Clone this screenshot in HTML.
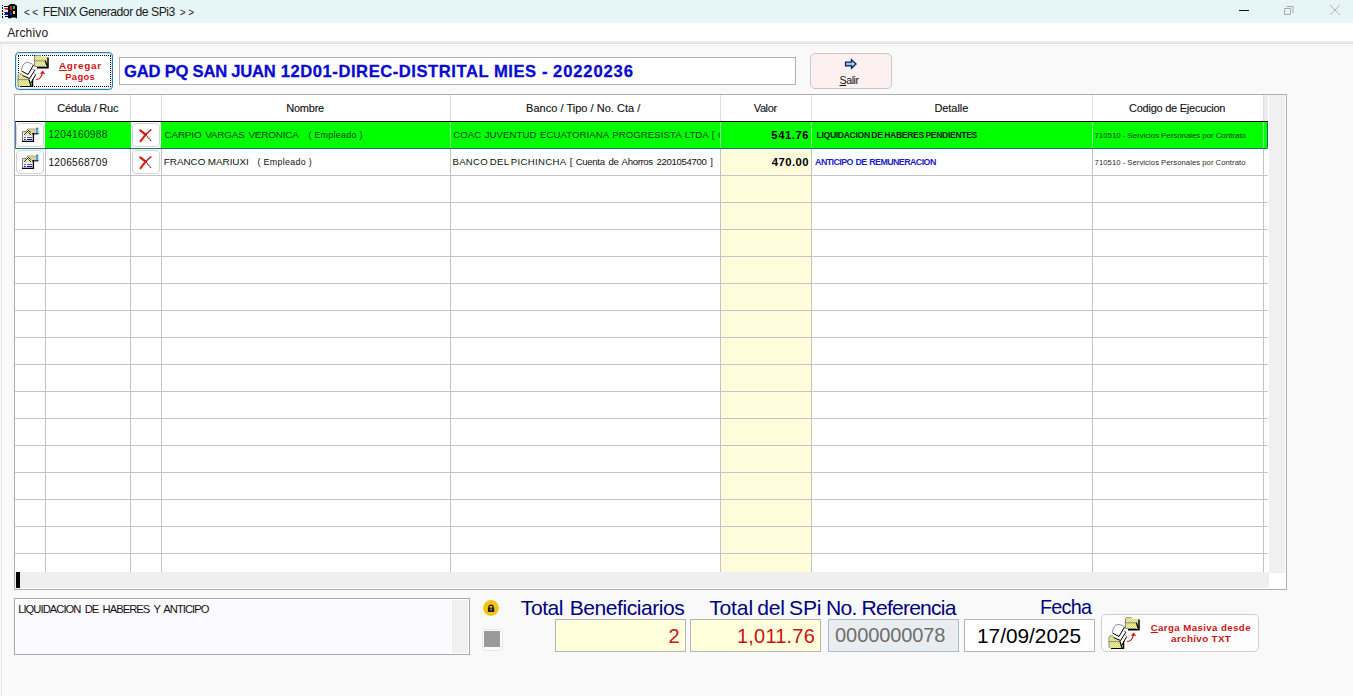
<!DOCTYPE html><html><head><meta charset="utf-8"><style>
*{box-sizing:border-box;margin:0;padding:0}
html,body{width:1353px;height:696px;overflow:hidden;background:#f9f9f9;font-family:"Liberation Sans",sans-serif;position:relative}
.a{position:absolute}
.t{position:absolute;white-space:pre;line-height:1}
</style></head><body>
<div class="a" style="left:0px;top:0px;width:1353px;height:23px;background:#e6f5f6"></div>
<div class="a" style="left:0px;top:23px;width:1353px;height:18px;background:#fff"></div>
<div class="a" style="left:0px;top:41px;width:1353px;height:1px;background:#f0f0f0"></div>
<div class="a" style="left:0px;top:42px;width:1353px;height:1px;background:#e6e6e6"></div>
<div class="a" style="left:0px;top:43px;width:1353px;height:1px;background:#dedede"></div>
<div class="a" style="left:0px;top:44px;width:1353px;height:1px;background:#fdfdfd"></div>
<div class="a" style="left:3px;top:45px;width:1350px;height:1px;background:#efefef"></div>
<div class="a" style="left:0px;top:16px;width:1353px;height:7px;background:#e6f6f9"></div>
<div class="a" style="left:1px;top:44px;width:1px;height:652px;background:#e6e6e6"></div>
<div class="a" style="left:2px;top:45px;width:1px;height:651px;background:#fdfdfd"></div>
<svg class="a" style="left:1px;top:3px" width="18" height="16" viewBox="0 0 18 16" shape-rendering="crispEdges">
<rect x="1" y="2" width="1" height="1" fill="#000"/><rect x="1" y="4" width="1" height="2" fill="#000"/><rect x="1" y="7" width="1" height="2" fill="#000"/><rect x="1" y="10" width="1" height="2" fill="#000"/><rect x="1" y="13" width="1" height="2" fill="#000"/>
<rect x="3" y="3" width="4" height="1" fill="#000"/>
<rect x="3" y="5" width="1" height="1" fill="#c04040"/><rect x="4" y="5" width="3" height="1" fill="#e02020"/>
<rect x="3" y="7" width="4" height="1" fill="#ffffff"/><rect x="4" y="6" width="3" height="1" fill="#e84040"/>
<rect x="3" y="9" width="1" height="1" fill="#4040c0"/><rect x="4" y="9" width="3" height="1" fill="#2020d0"/>
<rect x="4" y="10" width="3" height="1" fill="#000"/>
<rect x="3" y="11" width="4" height="1" fill="#2020d0"/>
<rect x="4" y="13" width="3" height="1" fill="#000"/>
<path d="M7 15V3l1-1 2-1h3l2 1 1 1v12.5l-2-1h-3l-2 1z" fill="#000" shape-rendering="auto"/>
<rect x="9" y="3" width="2" height="4" fill="#e02020"/><rect x="12" y="3" width="2" height="3" fill="#20d040"/>
<rect x="9" y="8" width="2" height="4" fill="#1a1ad8"/><rect x="12" y="8" width="2" height="3" fill="#f0e030"/>
</svg>
<div class="t" style="left:42.70px;top:6px;font-size:12.2px;letter-spacing:-0.502px;color:#1a1a1a;">FENIX Generador de SPi3</div>
<div class="t" style="left:24.11px;top:8px;font-size:10.0px;letter-spacing:0.000px;color:#1a1a1a;">&lt;</div>
<div class="t" style="left:32.31px;top:8px;font-size:10.0px;letter-spacing:0.000px;color:#1a1a1a;">&lt;</div>
<div class="t" style="left:179.81px;top:8px;font-size:10.0px;letter-spacing:0.000px;color:#1a1a1a;">&gt;</div>
<div class="t" style="left:188.21px;top:8px;font-size:10.0px;letter-spacing:0.000px;color:#1a1a1a;">&gt;</div>
<div class="t" style="left:7.18px;top:27px;font-size:12.0px;letter-spacing:0.151px;color:#1a1a1a;">Archivo</div>
<div class="a" style="left:1239px;top:10px;width:10px;height:1px;background:#111"></div>
<svg class="a" style="left:1283px;top:4px" width="12" height="12" viewBox="0 0 12 12"><path d="M1.5 4.5h6v6h-6z" fill="none" stroke="#a8a8a8" stroke-width="1"/><path d="M3.5 2.5h6.5v6.5" fill="none" stroke="#a8a8a8" stroke-width="1"/></svg>
<svg class="a" style="left:1329px;top:4px" width="12" height="12" viewBox="0 0 12 12"><path d="M1 1l10 10M11 1L1 11" stroke="#b4b4b4" stroke-width="1"/></svg>
<div class="a" style="left:14px;top:94px;width:1273px;height:496px;border:1px solid #aeaeae;background:#fff"></div>
<div class="a" style="left:721px;top:148px;width:90px;height:424px;background:#fffcdc"></div>
<div class="a" style="left:1269px;top:95px;width:16px;height:478px;background:#f0f0f0"></div>
<div class="a" style="left:1264px;top:95px;width:4px;height:26px;background:#ececec"></div>
<div class="a" style="left:15px;top:572px;width:1254px;height:16px;background:#efefef"></div>
<div class="a" style="left:16px;top:572px;width:4px;height:16px;background:#000"></div>
<div class="a" style="left:15px;top:148px;width:1253px;height:1px;background:#c4c4c4"></div>
<div class="a" style="left:15px;top:175px;width:1253px;height:1px;background:#c4c4c4"></div>
<div class="a" style="left:15px;top:202px;width:1253px;height:1px;background:#c4c4c4"></div>
<div class="a" style="left:15px;top:229px;width:1253px;height:1px;background:#c4c4c4"></div>
<div class="a" style="left:15px;top:256px;width:1253px;height:1px;background:#c4c4c4"></div>
<div class="a" style="left:15px;top:283px;width:1253px;height:1px;background:#c4c4c4"></div>
<div class="a" style="left:15px;top:310px;width:1253px;height:1px;background:#c4c4c4"></div>
<div class="a" style="left:15px;top:337px;width:1253px;height:1px;background:#c4c4c4"></div>
<div class="a" style="left:15px;top:364px;width:1253px;height:1px;background:#c4c4c4"></div>
<div class="a" style="left:15px;top:391px;width:1253px;height:1px;background:#c4c4c4"></div>
<div class="a" style="left:15px;top:418px;width:1253px;height:1px;background:#c4c4c4"></div>
<div class="a" style="left:15px;top:445px;width:1253px;height:1px;background:#c4c4c4"></div>
<div class="a" style="left:15px;top:472px;width:1253px;height:1px;background:#c4c4c4"></div>
<div class="a" style="left:15px;top:499px;width:1253px;height:1px;background:#c4c4c4"></div>
<div class="a" style="left:15px;top:526px;width:1253px;height:1px;background:#c4c4c4"></div>
<div class="a" style="left:15px;top:553px;width:1253px;height:1px;background:#c4c4c4"></div>
<div class="a" style="left:16px;top:149px;width:1252px;height:1px;background:#e6f8f8"></div>
<div class="a" style="left:45px;top:121px;width:1px;height:451px;background:#c4c4c4"></div>
<div class="a" style="left:45px;top:95px;width:1px;height:26px;background:#dcdce4"></div>
<div class="a" style="left:130px;top:121px;width:1px;height:451px;background:#c4c4c4"></div>
<div class="a" style="left:130px;top:95px;width:1px;height:26px;background:#dcdce4"></div>
<div class="a" style="left:161px;top:121px;width:1px;height:451px;background:#c4c4c4"></div>
<div class="a" style="left:161px;top:95px;width:1px;height:26px;background:#dcdce4"></div>
<div class="a" style="left:450px;top:121px;width:1px;height:451px;background:#c4c4c4"></div>
<div class="a" style="left:450px;top:95px;width:1px;height:26px;background:#dcdce4"></div>
<div class="a" style="left:720px;top:121px;width:1px;height:451px;background:#c4c4c4"></div>
<div class="a" style="left:720px;top:95px;width:1px;height:26px;background:#dcdce4"></div>
<div class="a" style="left:811px;top:121px;width:1px;height:451px;background:#c4c4c4"></div>
<div class="a" style="left:811px;top:95px;width:1px;height:26px;background:#dcdce4"></div>
<div class="a" style="left:1092px;top:121px;width:1px;height:451px;background:#c4c4c4"></div>
<div class="a" style="left:1092px;top:95px;width:1px;height:26px;background:#dcdce4"></div>
<div class="a" style="left:1263px;top:121px;width:1px;height:451px;background:#c4c4c4"></div>
<div class="a" style="left:1263px;top:95px;width:1px;height:26px;background:#dcdce4"></div>
<div class="t" style="left:57.15px;top:103px;font-size:11.0px;letter-spacing:-0.202px;color:#111;-webkit-text-stroke:0.12px currentColor">Cédula / Ruc</div>
<div class="t" style="left:286.29px;top:103px;font-size:11.0px;letter-spacing:-0.240px;color:#111;-webkit-text-stroke:0.12px currentColor">Nombre</div>
<div class="t" style="left:526.09px;top:103px;font-size:11.0px;letter-spacing:0.022px;color:#111;-webkit-text-stroke:0.12px currentColor">Banco / Tipo / No. Cta /</div>
<div class="t" style="left:753.76px;top:103px;font-size:11.0px;letter-spacing:-0.386px;color:#111;-webkit-text-stroke:0.12px currentColor">Valor</div>
<div class="t" style="left:934.39px;top:103px;font-size:11.0px;letter-spacing:-0.049px;color:#111;-webkit-text-stroke:0.12px currentColor">Detalle</div>
<div class="t" style="left:1129.05px;top:103px;font-size:11.0px;letter-spacing:-0.248px;color:#111;-webkit-text-stroke:0.12px currentColor">Codigo de Ejecucion</div>
<div class="a" style="left:15px;top:121px;width:1253px;height:28px;background:#00ff00;border-top:1px solid #000;border-bottom:1px solid #1c7066;border-left:1px solid #4a80b8;border-right:1px solid #1c7066;border-bottom-right-radius:2px"></div>
<div class="a" style="left:16px;top:122px;width:29px;height:26px;background:#fff"></div>
<div class="a" style="left:131px;top:122px;width:30px;height:26px;background:#fff"></div>
<div class="a" style="left:450px;top:122px;width:1px;height:26px;background:#8cff8c"></div>
<div class="a" style="left:720px;top:122px;width:1px;height:26px;background:#8cff8c"></div>
<div class="a" style="left:811px;top:122px;width:1px;height:26px;background:#8cff8c"></div>
<div class="a" style="left:1092px;top:122px;width:1px;height:26px;background:#8cff8c"></div>
<div class="a" style="left:1263px;top:122px;width:1px;height:26px;background:#8cff8c"></div>
<div class="a" style="left:16px;top:123px;width:28px;height:24px;border:1px solid #d4d4d4;border-radius:4px;background:#fdfdfd"></div>
<div class="a" style="left:132px;top:123px;width:28px;height:24px;border:1px solid #d4d4d4;border-radius:4px;background:#fdfdfd"></div>
<svg class="a" style="left:21px;top:127px" width="18" height="16" viewBox="0 0 18 16">
<defs><pattern id="ck2" width="2" height="2" patternUnits="userSpaceOnUse"><rect width="2" height="2" fill="#f0eca0"/><rect width="1" height="1" fill="#202010"/><rect x="1" y="1" width="1" height="1" fill="#202010"/></pattern></defs>
<path d="M1.5 4.5h11v10h-11z" fill="#eef0ff"/>
<path d="M1.5 14.5V4.5h11" fill="none" stroke="#808080" stroke-width="1"/>
<path d="M12.4 4.5v9.9H1" fill="none" stroke="#000" stroke-width="1.3"/>
<path d="M3 10.5h1.8M6 10.5h5" stroke="#5050b0" stroke-width="1"/>
<path d="M3 12.5h1.8M6 12.5h5" stroke="#10107a" stroke-width="1.2"/>
<path d="M3.2 7.8l4-4.8 3 5.2-1.5 1.2z" fill="#f2eeb8"/>
<path d="M3.2 7.8l4-4.8 2.8 5.2" fill="none" stroke="url(#ck2)" stroke-width="2"/>
<path d="M8 2h7.5v4.6h-5z" fill="#d6cf9c"/>
<path d="M8 2h7" stroke="#b8b080" stroke-width="1"/>
<path d="M15 1.2h2.3v5.3H15z" fill="#48a6e6"/>
<path d="M15 1.2h2.3" stroke="#1a5aa0" stroke-width="0.8"/>
<path d="M11 6.8h6.5" stroke="#000" stroke-width="1.1"/>
</svg>
<svg class="a" style="left:139px;top:129px" width="14" height="14" viewBox="0 0 14 14">
<path d="M1.3 1.3L6.6 5.6" stroke="#d41a14" stroke-width="2.2" stroke-linecap="round"/>
<path d="M6.6 5.6L12.4 12.4" stroke="#a00a0a" stroke-width="1.1" stroke-dasharray="1.6 0.6"/>
<path d="M1.6 12.1L6.6 5.6" stroke="#dc2418" stroke-width="2.2" stroke-linecap="round"/>
<path d="M6.6 5.6L12.4 0.6" stroke="#b00c0c" stroke-width="1.3"/>
</svg>
<div class="a" style="left:16px;top:150px;width:28px;height:24px;border:1px solid #d4d4d4;border-radius:4px;background:#fdfdfd"></div>
<div class="a" style="left:132px;top:150px;width:28px;height:24px;border:1px solid #d4d4d4;border-radius:4px;background:#fdfdfd"></div>
<svg class="a" style="left:21px;top:154px" width="18" height="16" viewBox="0 0 18 16">
<defs><pattern id="ck2" width="2" height="2" patternUnits="userSpaceOnUse"><rect width="2" height="2" fill="#f0eca0"/><rect width="1" height="1" fill="#202010"/><rect x="1" y="1" width="1" height="1" fill="#202010"/></pattern></defs>
<path d="M1.5 4.5h11v10h-11z" fill="#eef0ff"/>
<path d="M1.5 14.5V4.5h11" fill="none" stroke="#808080" stroke-width="1"/>
<path d="M12.4 4.5v9.9H1" fill="none" stroke="#000" stroke-width="1.3"/>
<path d="M3 10.5h1.8M6 10.5h5" stroke="#5050b0" stroke-width="1"/>
<path d="M3 12.5h1.8M6 12.5h5" stroke="#10107a" stroke-width="1.2"/>
<path d="M3.2 7.8l4-4.8 3 5.2-1.5 1.2z" fill="#f2eeb8"/>
<path d="M3.2 7.8l4-4.8 2.8 5.2" fill="none" stroke="url(#ck2)" stroke-width="2"/>
<path d="M8 2h7.5v4.6h-5z" fill="#d6cf9c"/>
<path d="M8 2h7" stroke="#b8b080" stroke-width="1"/>
<path d="M15 1.2h2.3v5.3H15z" fill="#48a6e6"/>
<path d="M15 1.2h2.3" stroke="#1a5aa0" stroke-width="0.8"/>
<path d="M11 6.8h6.5" stroke="#000" stroke-width="1.1"/>
</svg>
<svg class="a" style="left:139px;top:156px" width="14" height="14" viewBox="0 0 14 14">
<path d="M1.3 1.3L6.6 5.6" stroke="#d41a14" stroke-width="2.2" stroke-linecap="round"/>
<path d="M6.6 5.6L12.4 12.4" stroke="#a00a0a" stroke-width="1.1" stroke-dasharray="1.6 0.6"/>
<path d="M1.6 12.1L6.6 5.6" stroke="#dc2418" stroke-width="2.2" stroke-linecap="round"/>
<path d="M6.6 5.6L12.4 0.6" stroke="#b00c0c" stroke-width="1.3"/>
</svg>
<div class="t" style="left:48.43px;top:130px;font-size:10.2px;letter-spacing:0.248px;color:#0a3a0a;">1204160988</div>
<div class="t" style="left:48.43px;top:158px;font-size:10.2px;letter-spacing:0.252px;color:#111;">1206568709</div>
<div class="t" style="left:164.48px;top:130px;font-size:9.9px;letter-spacing:-0.152px;word-spacing:1.132px;color:#0a3a0a;">CARPIO VARGAS VERONICA</div>
<div class="t" style="left:308.44px;top:131px;font-size:9.0px;letter-spacing:0.221px;color:#0a3a0a;">( Empleado )</div>
<div class="t" style="left:163.82px;top:157px;font-size:9.9px;letter-spacing:-0.036px;word-spacing:-0.175px;color:#111;">FRANCO MARIUXI</div>
<div class="t" style="left:257.45px;top:158px;font-size:8.9px;letter-spacing:0.322px;color:#111;">( Empleado )</div>
<div class="t" style="left:452.44px;top:157px;font-size:9.6px;letter-spacing:0.319px;word-spacing:-1.320px;color:#111;">BANCO DEL PICHINCHA</div>
<div class="t" style="left:569.67px;top:157px;font-size:9.6px;letter-spacing:-0.337px;word-spacing:1.415px;color:#111;">[ Cuenta de Ahorros 2201054700 ]</div>
<div class="a" style="left:451px;top:122px;width:269px;height:26px;overflow:hidden">
<div class="t" style="left:2.20px;top:8px;font-size:9.6px;letter-spacing:0.087px;word-spacing:0.674px;color:#0a3a0a;">COAC JUVENTUD ECUATORIANA PROGRESISTA LTDA [ Cuenta de Ahorros</div>
</div>
<div class="t" style="left:771.36px;top:130px;font-size:11.2px;letter-spacing:0.561px;font-weight:bold;color:#000;">541.76</div>
<div class="t" style="left:771.83px;top:157px;font-size:11.3px;letter-spacing:0.451px;font-weight:bold;color:#000;">470.00</div>
<div class="t" style="left:816.60px;top:131px;font-size:8.6px;letter-spacing:-0.332px;word-spacing:-0.495px;font-weight:bold;color:#0a200a;">LIQUIDACION DE HABERES PENDIENTES</div>
<div class="t" style="left:815.12px;top:158px;font-size:8.9px;letter-spacing:-0.579px;word-spacing:0.690px;font-weight:bold;color:#1c1cd0;">ANTICIPO DE REMUNERACION</div>
<div class="t" style="left:1094.51px;top:132px;font-size:8.0px;letter-spacing:-0.081px;word-spacing:-0.121px;color:#0a3a0a;">710510 - Servicios Personales por Contrato</div>
<div class="t" style="left:1094.59px;top:159px;font-size:7.7px;letter-spacing:0.072px;word-spacing:-0.231px;color:#2a2a2a;">710510 - Servicios Personales por Contrato</div>
<div class="a" style="left:15px;top:52px;width:98px;height:38px;border:1px solid #3a76b2;border-radius:4px;background:#fff;box-shadow:inset 0 0 0 1px #c4eefa"></div>
<div class="a" style="left:18px;top:55px;width:93px;height:32px;border:1px dotted #000"></div>
<svg class="a" style="left:17px;top:55px" width="32" height="32" viewBox="0 0 32 32">
<defs><pattern id="chka" width="2" height="2" patternUnits="userSpaceOnUse"><rect width="2" height="2" fill="#f2f2b0"/><rect width="1" height="1" fill="#d4d470"/><rect x="1" y="1" width="1" height="1" fill="#d4d470"/></pattern></defs>
<path d="M18 6V1.5l1-1h5l1 1.5h5.5v9.5H18z" fill="url(#chka)"/>
<path d="M17.5 6V1.5l1.5-1.2h4.5" fill="none" stroke="#8a8a7a" stroke-width="1"/>
<path d="M16.5 5.8h12l2 5.7h-12.5z" fill="url(#chka)"/>
<path d="M16.5 5.8h12M17.5 6v5.5h11" fill="none" stroke="#8c8c80" stroke-width="1"/>
<path d="M28.3 5.8l2.2 6" fill="none" stroke="#000" stroke-width="1.3"/>
<path d="M31 2.5v10.3H20" fill="none" stroke="#000" stroke-width="1.5"/>
<path d="M1.5 24.5V20l1-1h3l1 1.5h8v11H1.5z" fill="url(#chka)"/>
<path d="M1 24.5V20l1.3-1.2h3" fill="none" stroke="#8a8a7a" stroke-width="1"/>
<path d="M0.3 24.6h11.7l2 6.6H1.5z" fill="url(#chka)"/>
<path d="M0.3 24.6h11.7M1 25v6" fill="none" stroke="#8c8c80" stroke-width="1"/>
<path d="M12 24.6l2.2 6.8" fill="none" stroke="#000" stroke-width="1.3"/>
<path d="M15.5 22v9.7H3" fill="none" stroke="#000" stroke-width="1.5"/>
<path d="M4.5 16C4.5 11 7 7.5 10 7.5c2.5 0 4.5 1 6.5 2.5L11 19.5z" fill="#fff"/>
<path d="M5.5 20.5l7 3 5.5-8.5-2.5-1z" fill="#fff"/>
<path d="M13.5 27.5l5-8-1.5-1.5-4 6.5z" fill="#fff"/>
<path d="M4.5 15.5C4.8 11 7 7.5 10 7.5c2.5 0 4.5 1 6.5 2.3" fill="none" stroke="#707070" stroke-width="0.8"/>
<path d="M4.5 16l6.5 3.5 5.5-9.5" fill="none" stroke="#000" stroke-width="1"/>
<path d="M5.5 20.5l7 3 5.5-8.5" fill="none" stroke="#000" stroke-width="1"/>
<path d="M15.5 14l2.5 1" stroke="#808080" stroke-width="0.9"/>
<path d="M14 28l4.8-8.5" fill="none" stroke="#000" stroke-width="1"/>
<path d="M17 18l1.8 1.5" stroke="#808080" stroke-width="0.9"/>
<path d="M19 24.5c2 0 3.5-0.5 4.5-2s1.5-3 2-5" fill="none" stroke="#e01010" stroke-width="1.1"/>
<path d="M23 18.8l2.6-3.3 2.6 3.3z" fill="#e01010"/>
</svg>
<div class="t" style="left:58.96px;top:61px;font-size:9.9px;letter-spacing:0.697px;font-weight:bold;color:#d01414;"><u>A</u>gregar</div>
<div class="t" style="left:65.28px;top:72px;font-size:9.4px;letter-spacing:0.337px;font-weight:bold;color:#d01414;">Pagos</div>
<div class="a" style="left:119px;top:57px;width:677px;height:28px;border:1px solid #b0b0b0;background:#fff"></div>
<div class="t" style="left:124.12px;top:64px;font-size:16.6px;letter-spacing:-0.232px;font-weight:bold;color:#0a0ad0;-webkit-text-stroke:0.3px currentColor">GAD PQ SAN JUAN</div>
<div class="t" style="left:280.77px;top:64px;font-size:16.6px;letter-spacing:0.541px;font-weight:bold;color:#0a0ad0;-webkit-text-stroke:0.3px currentColor">12D01-DIREC-DISTRITAL MIES</div>
<div class="t" style="left:541.95px;top:64px;font-size:16.6px;letter-spacing:0.000px;font-weight:bold;color:#0a0ad0;-webkit-text-stroke:0.3px currentColor">-</div>
<div class="t" style="left:553.04px;top:64px;font-size:16.6px;letter-spacing:0.870px;font-weight:bold;color:#0a0ad0;-webkit-text-stroke:0.3px currentColor">20220236</div>
<div class="a" style="left:810px;top:53px;width:82px;height:36px;border:1px solid #c8c8c8;border-radius:5px;background:#fdf0f0"></div>
<svg class="a" style="left:844px;top:58px" width="14" height="12" viewBox="0 0 14 12">
<defs><linearGradient id="ag" x1="0" y1="0" x2="0" y2="1"><stop offset="0" stop-color="#c8f0ff"/><stop offset="1" stop-color="#48a8e8"/></linearGradient></defs>
<path d="M1.5 4.2h6V1.6l4.6 4.4-4.6 4.4V7.8h-6z" fill="url(#ag)" stroke="#0a1850" stroke-width="1.2" stroke-linejoin="miter"/>
</svg>
<div class="t" style="left:839.52px;top:75px;font-size:10.6px;letter-spacing:-0.421px;color:#111;"><u>S</u>alir</div>
<div class="a" style="left:14px;top:598px;width:456px;height:57px;border:1px solid #a8a8a8;background:#fafaff;box-shadow:inset 0 0 0 1px #fff"></div>
<div class="a" style="left:452px;top:600px;width:16px;height:53px;background:#f0f0f0"></div>
<div class="t" style="left:18.19px;top:604px;font-size:11.2px;letter-spacing:-0.956px;word-spacing:2.107px;color:#111;">LIQUIDACION DE HABERES Y ANTICIPO</div>
<div class="t" style="left:520.82px;top:597px;font-size:21.1px;letter-spacing:-0.468px;word-spacing:1.236px;color:#000080;">Total Beneficiarios</div>
<div class="t" style="left:709.13px;top:597px;font-size:21.1px;letter-spacing:-0.142px;word-spacing:-1.560px;color:#000080;">Total del SPi</div>
<div class="t" style="left:826.07px;top:597px;font-size:21.1px;letter-spacing:-0.797px;color:#000080;">No. Referencia</div>
<div class="t" style="left:1039.98px;top:598px;font-size:19.8px;letter-spacing:-0.733px;color:#000080;">Fecha</div>
<div class="a" style="left:555px;top:619px;width:131px;height:33px;border:1px solid #b4b4b4;background:#ffffdc"></div>
<div class="t" style="left:668.40px;top:626px;font-size:20.0px;letter-spacing:0.000px;color:#d01010;">2</div>
<div class="a" style="left:690px;top:619px;width:131px;height:33px;border:1px solid #b4b4b4;background:#ffffdc"></div>
<div class="t" style="left:736.98px;top:626px;font-size:20.0px;letter-spacing:0.203px;color:#d01010;">1,011.76</div>
<div class="a" style="left:828px;top:619px;width:131px;height:33px;border:1px solid #a9bccc;background:#eaedf0"></div>
<div class="t" style="left:835.12px;top:625px;font-size:20.0px;letter-spacing:-0.109px;color:#6e6e6e;">0000000078</div>
<div class="a" style="left:964px;top:619px;width:131px;height:33px;border:1px solid #b4b4b4;background:#fff"></div>
<div class="t" style="left:977.02px;top:626px;font-size:20.8px;letter-spacing:0.003px;color:#000;">17/09/2025</div>
<svg class="a" style="left:483px;top:600px" width="16" height="16" viewBox="0 0 16 16">
<circle cx="8" cy="8" r="7.9" fill="#f3c414"/>
<path d="M5.9 8V7.2a2.1 2.1 0 0 1 4.2 0V8" fill="none" stroke="#1a1a1a" stroke-width="1.3"/>
<rect x="4.9" y="7.6" width="6.3" height="4.3" fill="#1a1a1a"/>
<rect x="7.5" y="8.6" width="1.1" height="1.8" fill="#e8d070"/>
</svg>
<div class="a" style="left:482px;top:629px;width:21px;height:22px;border:1px solid #e6e6e6;border-radius:3px;background:#fbfbfb"></div>
<div class="a" style="left:484px;top:631px;width:16px;height:16px;background:#9a9a9a"></div>
<div class="a" style="left:1101px;top:614px;width:158px;height:38px;border:1px solid #d0d0d0;border-radius:5px;background:#fdfdfd"></div>
<svg class="a" style="left:1108px;top:617px" width="32" height="32" viewBox="0 0 32 32">
<defs><pattern id="chkb" width="2" height="2" patternUnits="userSpaceOnUse"><rect width="2" height="2" fill="#f2f2b0"/><rect width="1" height="1" fill="#d4d470"/><rect x="1" y="1" width="1" height="1" fill="#d4d470"/></pattern></defs>
<path d="M18 6V1.5l1-1h5l1 1.5h5.5v9.5H18z" fill="url(#chkb)"/>
<path d="M17.5 6V1.5l1.5-1.2h4.5" fill="none" stroke="#8a8a7a" stroke-width="1"/>
<path d="M16.5 5.8h12l2 5.7h-12.5z" fill="url(#chkb)"/>
<path d="M16.5 5.8h12M17.5 6v5.5h11" fill="none" stroke="#8c8c80" stroke-width="1"/>
<path d="M28.3 5.8l2.2 6" fill="none" stroke="#000" stroke-width="1.3"/>
<path d="M31 2.5v10.3H20" fill="none" stroke="#000" stroke-width="1.5"/>
<path d="M1.5 24.5V20l1-1h3l1 1.5h8v11H1.5z" fill="url(#chkb)"/>
<path d="M1 24.5V20l1.3-1.2h3" fill="none" stroke="#8a8a7a" stroke-width="1"/>
<path d="M0.3 24.6h11.7l2 6.6H1.5z" fill="url(#chkb)"/>
<path d="M0.3 24.6h11.7M1 25v6" fill="none" stroke="#8c8c80" stroke-width="1"/>
<path d="M12 24.6l2.2 6.8" fill="none" stroke="#000" stroke-width="1.3"/>
<path d="M15.5 22v9.7H3" fill="none" stroke="#000" stroke-width="1.5"/>
<path d="M4.5 16C4.5 11 7 7.5 10 7.5c2.5 0 4.5 1 6.5 2.5L11 19.5z" fill="#fff"/>
<path d="M5.5 20.5l7 3 5.5-8.5-2.5-1z" fill="#fff"/>
<path d="M13.5 27.5l5-8-1.5-1.5-4 6.5z" fill="#fff"/>
<path d="M4.5 15.5C4.8 11 7 7.5 10 7.5c2.5 0 4.5 1 6.5 2.3" fill="none" stroke="#707070" stroke-width="0.8"/>
<path d="M4.5 16l6.5 3.5 5.5-9.5" fill="none" stroke="#000" stroke-width="1"/>
<path d="M5.5 20.5l7 3 5.5-8.5" fill="none" stroke="#000" stroke-width="1"/>
<path d="M15.5 14l2.5 1" stroke="#808080" stroke-width="0.9"/>
<path d="M14 28l4.8-8.5" fill="none" stroke="#000" stroke-width="1"/>
<path d="M17 18l1.8 1.5" stroke="#808080" stroke-width="0.9"/>
<path d="M19 24.5c2 0 3.5-0.5 4.5-2s1.5-3 2-5" fill="none" stroke="#e01010" stroke-width="1.1"/>
<path d="M23 18.8l2.6-3.3 2.6 3.3z" fill="#e01010"/>
</svg>
<div class="t" style="left:1150.70px;top:623px;font-size:9.7px;letter-spacing:0.393px;font-weight:bold;color:#d01414;"><u>C</u>arga Masiva desde</div>
<div class="t" style="left:1171.11px;top:634px;font-size:9.9px;letter-spacing:0.321px;font-weight:bold;color:#d01414;">archivo TXT</div>
</body></html>
